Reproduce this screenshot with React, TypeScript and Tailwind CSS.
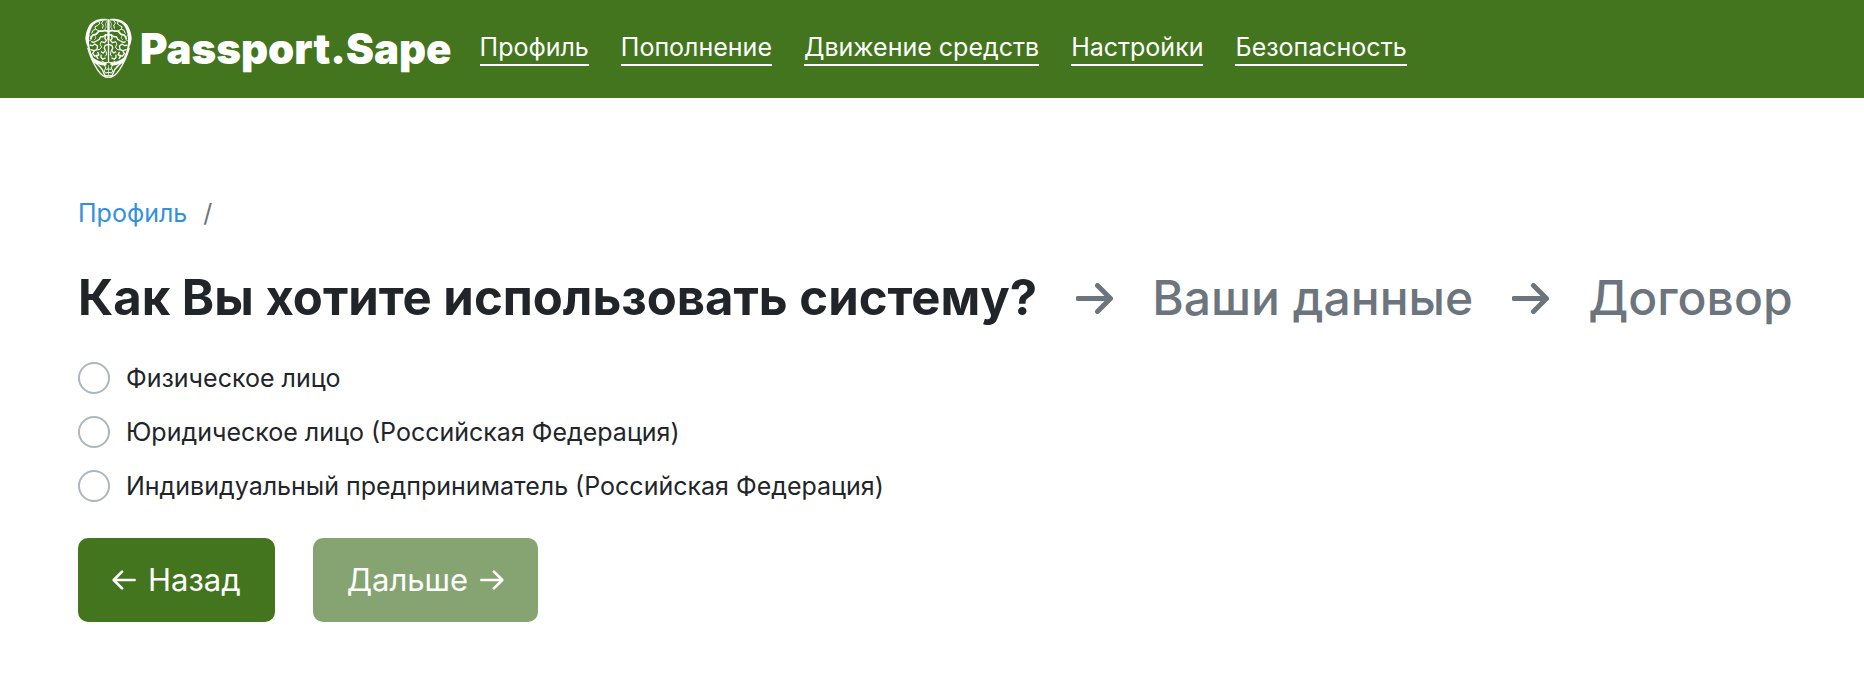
import { useState } from 'react'

interface NavLink {
  id: string
  title: string
}

const navLinks: NavLink[] = [
  { id: 'profile', title: 'Профиль' },
  { id: 'refill', title: 'Пополнение' },
  { id: 'history', title: 'Движение средств' },
  { id: 'settings', title: 'Настройки' },
  { id: 'security', title: 'Безопасность' },
]

const accountTypes = [
  { id: 'person', title: 'Физическое лицо' },
  { id: 'company', title: 'Юридическое лицо (Российская Федерация)' },
  { id: 'entrepreneur', title: 'Индивидуальный предприниматель (Российская Федерация)' },
]

// One half of the brain, the other one is mirrored
function BrainHalf() {
  return (
    <g>
      <path d="M112 55 C88 53 66 60 56 80 C50 92 47 104 47 116 L50 130 L57 146 L58 124 C57 106 61 90 68 78 C78 64 94 60 112 60 Z" fill="white" stroke="none" />
      <path d="M56 126 C57 144 61 158 68 170" strokeWidth="4" />
      <path d="M54 142 C60 164 70 188 84 209 C94 224 104 232 117 232" strokeWidth="4" />
      <path d="M61 160 C72 178 92 184 112 189 L110 196 C92 196 76 190 65 176 Z" fill="white" stroke="none" />
      <path d="M72 184 C84 190 92 200 98 208 L106 226 L117 227" strokeWidth="4" />
      <path d="M104 194 L109 203 L104 212 L109 220 M117 206 L109 208 M117 217 L109 218" strokeWidth="3" />
      <path d="M112 62 L108 70 L110 80 L106 86 L111 95" strokeWidth="2" />
      <path d="M101 60 L96 68 L101 74 L99 84 M88 62 L90 70 L84 75" strokeWidth="3" />
      <path d="M117 92 L106 90 L97 92 L88 92 L80 101 L69 104 L62 116" strokeWidth="5" />
      <path d="M84 75 L76 79 L78 86 L70 90 L66 99 M78 86 L88 91" strokeWidth="3" />
      <path d="M58 105 L66 110 L64 119 L56 122 M75 103 L79 113 L73 119" strokeWidth="2" />
      <path d="M107 104 L101 109 L93 109 L89 117 L82 121 L72 126 L65 124" strokeWidth="4" />
      <path d="M117 104 L108 103 L106 114 L111 120 L105 127 L95 124" strokeWidth="4" />
      <path d="M60 134 L68 136 L76 131 L84 137 L82 148 L74 151" strokeWidth="4" />
      <path d="M62 148 L74 151 L69 160 L76 168 L84 164" strokeWidth="4" />
      <path d="M95 124 L92 132 L96 140 L91 147 L83 149" strokeWidth="3" />
      <path d="M117 132 L107 135 L104 143 L108 151 L101 158 L94 154" strokeWidth="4" />
      <path d="M84 155 L88 163 L81 169 L86 176 M95 163 L94 171 L100 177 L108 173" strokeWidth="4" />
      <path d="M110 153 L111 164 L106 168 M96 183 L106 187 L117 187" strokeWidth="3" />
    </g>
  )
}

function BrainLogo() {
  return (
    <svg viewBox="46 53 142 183" className="h-[61px] w-[47px] shrink-0" fill="none" stroke="white" strokeLinejoin="round" aria-hidden="true">
      <BrainHalf />
      <g transform="translate(234 0) scale(-1 1)">
        <BrainHalf />
      </g>
      <path d="M117 56 V120" strokeWidth="7" />
      <path d="M117 120 V188" strokeWidth="4" />
      <path d="M117 196 V228" strokeWidth="2" />
    </svg>
  )
}

function Arrow({ className }: { className: string }) {
  return (
    <svg viewBox="0 0 37 31" className={className} fill="none" stroke="currentColor" strokeLinecap="round" strokeLinejoin="round" aria-hidden="true">
      <path d="M2 15.500 H34 M21.500 2.500 L34.500 15.500 L21.500 28.500" />
    </svg>
  )
}

export default function App() {
  const [accountType, setAccountType] = useState<string | null>(null)

  return (
    <div className="min-h-screen bg-white font-['Inter',sans-serif] text-[25px] text-[#212529]">
      <header className="flex h-[98px] items-center bg-[#42751d] px-[85px] pb-0.5 text-white">
        <a href="#" className="flex items-center gap-2">
          <BrainLogo />
          <span className="pt-0.5 text-[42px] font-black leading-[48px]">Passport.Sape</span>
        </a>
        <nav className="ml-7 flex gap-8">
          {navLinks.map(link => (
            <a key={link.id} href={`#${link.id}`} className="whitespace-nowrap border-b-2 border-white leading-[34px]">
              {link.title}
            </a>
          ))}
        </nav>
      </header>

      <main className="px-[78px] pt-24">
        <nav className="flex gap-4 leading-[38px]">
          <a href="#profile" className="text-[#3490dc]">Профиль</a>
          <span className="text-[#6c757d]">/</span>
        </nav>

        <div className="mt-9 flex items-center gap-[39px] whitespace-nowrap text-[48px] font-medium leading-[60px] text-[#6c757d]">
          <h1 className="text-[49px] font-bold text-[#212529]">Как Вы хотите использовать систему?</h1>
          <Arrow className="h-[31px] w-[37px] shrink-0 stroke-[5]" />
          <span>Ваши данные</span>
          <Arrow className="h-[31px] w-[37px] shrink-0 stroke-[5]" />
          <span>Договор</span>
        </div>

        <form onSubmit={e => e.preventDefault()}>
          <div className="mt-[31px] flex flex-col items-start gap-4">
            {accountTypes.map(type => (
              <label key={type.id} className="flex items-center gap-4 leading-[38px]">
                <input
                  type="radio"
                  name="accountType"
                  value={type.id}
                  checked={accountType === type.id}
                  onChange={() => setAccountType(type.id)}
                  className="size-8 appearance-none rounded-full border-2 border-[#adb5bd] bg-white checked:border-[10px] checked:border-[#42751d]"
                />
                {type.title}
              </label>
            ))}
          </div>

          <div className="mt-[33px] flex gap-[38px] text-[31px] text-white">
            <button type="button" className="flex h-[84px] items-center gap-3 rounded-[10px] bg-[#42751d] px-[34px]">
              <Arrow className="h-5 w-6 rotate-180 stroke-[4]" />
              Назад
            </button>
            <button type="submit" disabled={!accountType} className="flex h-[84px] items-center gap-3 rounded-[10px] bg-[#42751d] px-[34px] disabled:bg-[#86a471]">
              Дальше
              <Arrow className="h-5 w-6 stroke-[4]" />
            </button>
          </div>
        </form>
      </main>
    </div>
  )
}
